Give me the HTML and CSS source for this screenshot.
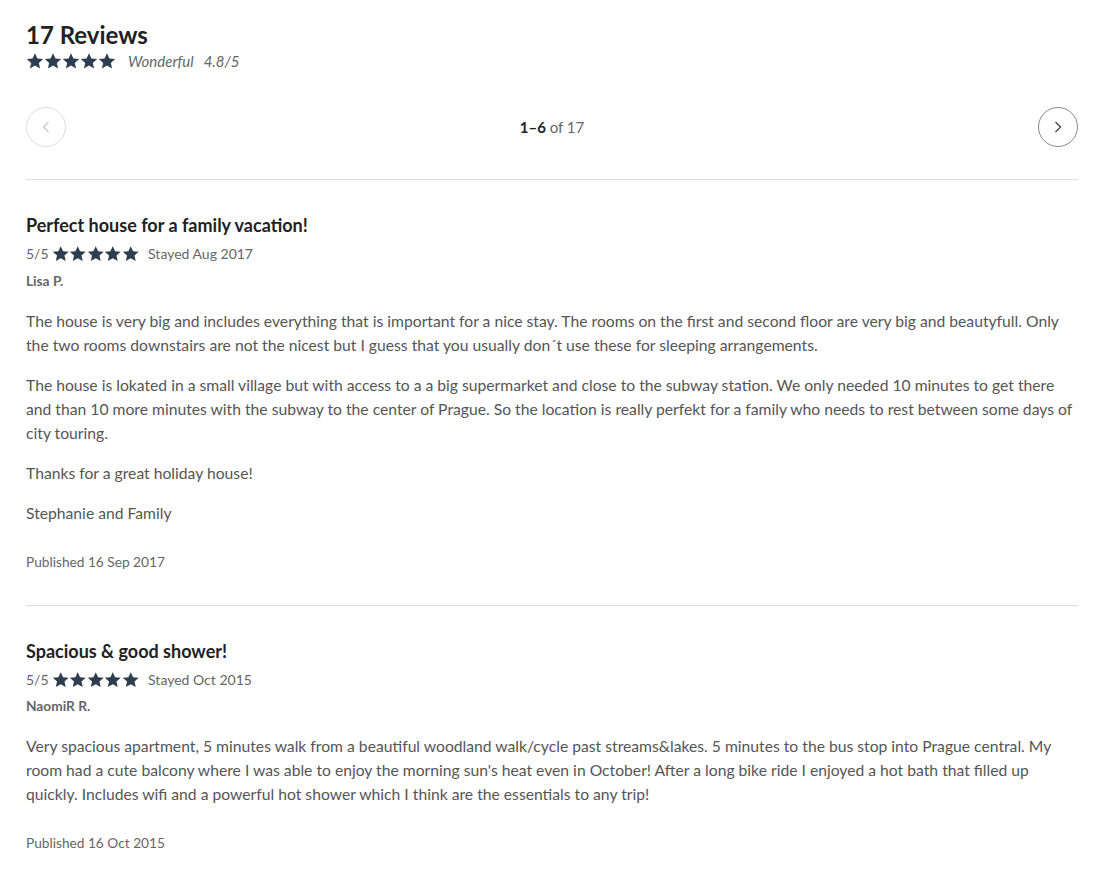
FILE: index.html
```html
<!DOCTYPE html>
<html lang="en">
<head>
    <meta charset="UTF-8">
    <title>Reviews</title>
    <link rel="stylesheet" href="styles.css">
</head>
<body>
    <svg width="0" height="0" style="position:absolute">
        <defs>
            <symbol id="star" viewBox="0 0 24 24">
                <path d="M12 1.6l3.2 7.1 7.7.7-5.8 5.1 1.7 7.6L12 18.1l-6.8 4 1.7-7.6L1.1 9.4l7.7-.7z"/>
            </symbol>
        </defs>
    </svg>

    <div class="reviews">
        <div class="summary">
            <h1 class="summary-title">17 Reviews</h1>
            <div class="summary-rating">
                <span class="stars">
                    <svg><use href="#star"/></svg><svg><use href="#star"/></svg><svg><use href="#star"/></svg><svg><use href="#star"/></svg><svg><use href="#star"/></svg>
                </span>
                <span class="summary-label">Wonderful</span>
                <span class="summary-score">4.8/5</span>
            </div>
        </div>

        <div class="pager">
            <button class="pager-btn disabled" aria-label="Previous">
                <svg viewBox="0 0 16 16"><path d="M10.5 3l-5 5 5 5"/></svg>
            </button>
            <div class="pager-count"><strong>1–6</strong> of 17</div>
            <button class="pager-btn" aria-label="Next">
                <svg viewBox="0 0 16 16"><path d="M5.5 3l5 5-5 5"/></svg>
            </button>
        </div>

        <div class="review">
            <h2 class="review-title">Perfect house for a family vacation!</h2>
            <div class="review-meta">
                <span class="review-score">5/5</span>
                <span class="stars">
                    <svg><use href="#star"/></svg><svg><use href="#star"/></svg><svg><use href="#star"/></svg><svg><use href="#star"/></svg><svg><use href="#star"/></svg>
                </span>
                <span class="review-stayed">Stayed Aug 2017</span>
            </div>
            <div class="review-author">Lisa P.</div>
            <div class="review-body">
                <p>The house is very big and includes everything that is important for a nice stay. The rooms on the first and second floor are very big and beautyfull. Only the two rooms downstairs are not the nicest but I guess that you usually don´t use these for sleeping arrangements.</p>
                <p>The house is lokated in a small village but with access to a a big supermarket and close to the subway station. We only needed 10 minutes to get there and than 10 more minutes with the subway to the center of Prague. So the location is really perfekt for a family who needs to rest between some days of city touring.</p>
                <p>Thanks for a great holiday house!</p>
                <p>Stephanie and Family</p>
            </div>
            <div class="review-published">Published 16 Sep 2017</div>
        </div>

        <div class="review">
            <h2 class="review-title">Spacious &amp; good shower!</h2>
            <div class="review-meta">
                <span class="review-score">5/5</span>
                <span class="stars">
                    <svg><use href="#star"/></svg><svg><use href="#star"/></svg><svg><use href="#star"/></svg><svg><use href="#star"/></svg><svg><use href="#star"/></svg>
                </span>
                <span class="review-stayed">Stayed Oct 2015</span>
            </div>
            <div class="review-author">NaomiR R.</div>
            <div class="review-body">
                <p>Very spacious apartment, 5 minutes walk from a beautiful woodland walk/cycle past streams&amp;lakes. 5 minutes to the bus stop into Prague central. My room had a cute balcony where I was able to enjoy the morning sun's heat even in October! After a long bike ride I enjoyed a hot bath that filled up quickly. Includes wifi and a powerful hot shower which I think are the essentials to any trip!</p>
            </div>
            <div class="review-published">Published 16 Oct 2015</div>
        </div>
    </div>
</body>
</html>
```

FILE: styles.css
```css
body {
    margin: 0;
    font-family: Lato, "Open Sans", sans-serif;
    color: #555;
    background: #fff;
}

.reviews {
    padding: 20px 28px 0 26px;
}

.summary-title {
    margin: 0;
    font-size: 24px;
    font-weight: 700;
    line-height: 30px;
    color: #222;
}

.summary-rating {
    display: flex;
    align-items: center;
    margin-top: 2px;
    font-size: 15px;
    font-style: italic;
    color: #666;
}

.stars {
    display: inline-flex;
    color: #2c3e50;
}

.stars svg {
    width: 18px;
    height: 18px;
    fill: currentColor;
}

.summary-label {
    margin-left: 12px;
}

.summary-score {
    margin-left: 10px;
}

.pager {
    display: flex;
    align-items: center;
    justify-content: space-between;
    margin-top: 37px;
    padding-bottom: 32px;
    border-bottom: 1px solid #ddd;
}

.pager-btn {
    width: 40px;
    height: 40px;
    padding: 0;
    border: 1px solid #888;
    border-radius: 50%;
    background: #fff;
    display: flex;
    align-items: center;
    justify-content: center;
    cursor: pointer;
}

.pager-btn svg {
    width: 16px;
    height: 16px;
    fill: none;
    stroke: #444;
    stroke-width: 1.3;
}

.pager-btn.disabled {
    border-color: #ddd;
    cursor: default;
}

.pager-btn.disabled svg {
    stroke: #ccc;
}

.pager-count {
    font-size: 15px;
    color: #666;
}

.pager-count strong {
    color: #222;
    font-weight: 700;
}

.review {
    padding: 33px 0 35px;
    border-bottom: 1px solid #ddd;
}

.review:last-child {
    border-bottom: none;
}

.review-title {
    margin: 0;
    font-size: 18px;
    font-weight: 700;
    line-height: 24px;
    color: #222;
}

.review-meta {
    display: flex;
    align-items: center;
    margin-top: 8px;
    font-size: 14px;
    color: #666;
}

.review-meta .stars {
    margin-left: 3px;
}

.review-meta .stars svg {
    width: 17.5px;
    height: 17.5px;
}

.review-stayed {
    margin-left: 9px;
}

.review-author {
    margin-top: 9px;
    font-size: 13.7px;
    font-weight: 700;
    color: #666;
}

.review-body {
    margin-top: 20px;
    font-size: 15.7px;
    line-height: 24px;
    color: #555;
}

.review-body p {
    margin: 0 0 16px;
}

.review-published {
    margin-top: 28px;
    font-size: 13.7px;
    color: #666;
}
```
